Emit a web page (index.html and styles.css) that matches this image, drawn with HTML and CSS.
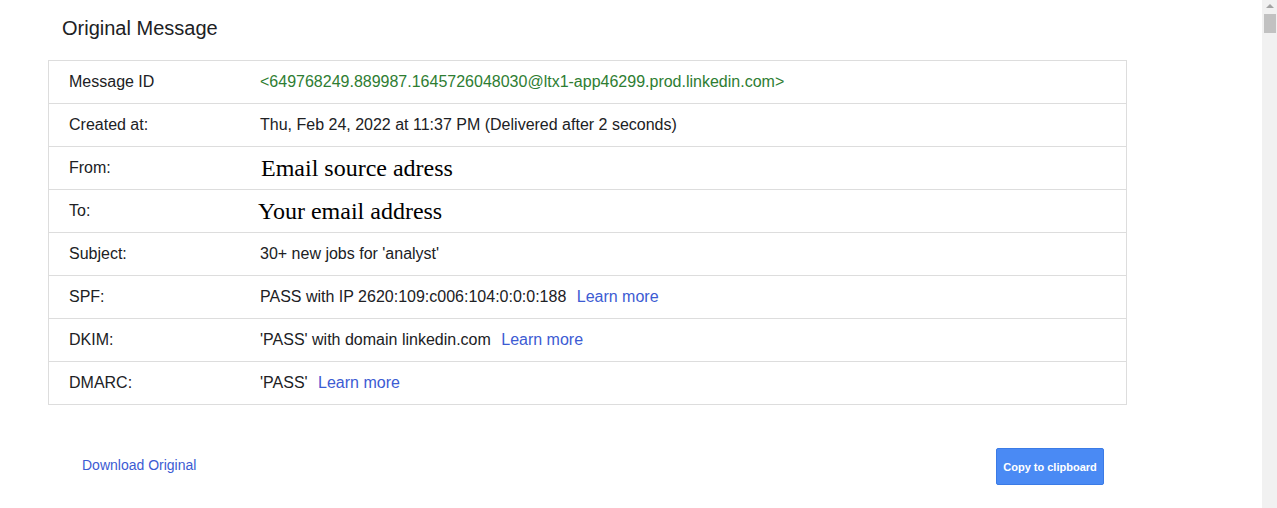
FILE: index.html
```html
<!DOCTYPE html>
<html>
<head>
<meta charset="utf-8">
<link rel="stylesheet" href="styles.css">
</head>
<body>
<div class="page">
  <main class="main">
    <h1 class="title">Original Message</h1>
    <div class="table">
      <div class="row"><div class="label">Message ID</div><div class="value green">&lt;649768249.889987.1645726048030@ltx1-app46299.prod.linkedin.com&gt;</div></div>
      <div class="row"><div class="label">Created at:</div><div class="value">Thu, Feb 24, 2022 at 11:37 PM (Delivered after 2 seconds)</div></div>
      <div class="row"><div class="label">From:</div><div class="value serif from">Email source adress</div></div>
      <div class="row"><div class="label">To:</div><div class="value serif to">Your email address</div></div>
      <div class="row"><div class="label">Subject:</div><div class="value">30+ new jobs for 'analyst'</div></div>
      <div class="row"><div class="label">SPF:</div><div class="value">PASS with IP 2620:109:c006:104:0:0:0:188 <a class="link">Learn more</a></div></div>
      <div class="row"><div class="label">DKIM:</div><div class="value">'PASS' with domain linkedin.com <a class="link">Learn more</a></div></div>
      <div class="row"><div class="label">DMARC:</div><div class="value">'PASS' <a class="link">Learn more</a></div></div>
    </div>
    <div class="actions">
      <a class="download">Download Original</a>
      <button class="copy">Copy to clipboard</button>
    </div>
  </main>
  <div class="scrollbar">
    <div class="arrow"></div>
    <div class="thumb"></div>
  </div>
</div>
</body>
</html>
```
FILE: styles.css
```css
html, body {
  margin: 0;
  padding: 0;
  background: #fff;
  height: 100%;
  overflow: hidden;
}
.page {
  display: flex;
  height: 508px;
  font-family: "Liberation Sans", Arial, sans-serif;
  color: #202124;
}
.main {
  flex: 1;
  padding: 0 0 0 48px;
}
.title {
  margin: 0;
  padding: 16px 0 0 14px;
  height: 60px;
  box-sizing: border-box;
  font-size: 20px;
  font-weight: normal;
  line-height: 24px;
  color: #202124;
}
.table {
  width: 1079px;
  box-sizing: border-box;
  border: 1px solid #dddddd;
  border-bottom: none;
}
.row {
  display: flex;
  align-items: center;
  height: 43px;
  box-sizing: border-box;
  border-bottom: 1px solid #dddddd;
  font-size: 16px;
}
.label {
  width: 211px;
  padding-left: 20px;
  box-sizing: border-box;
  flex: none;
}
.value {
  flex: 1;
  white-space: nowrap;
}
.green {
  color: #2e7d32;
}
.serif {
  font-family: "Liberation Serif", "Times New Roman", serif;
  font-size: 24px;
  color: #000;
}
.from {
  padding-left: 1px;
}
.to {
  margin-left: -2px;
  padding-top: 1px;
}
.link {
  color: #3c5bd3;
  margin-left: 6px;
}
.actions {
  display: flex;
  align-items: center;
  justify-content: space-between;
  width: 1056px;
  padding: 43px 0 0 34px;
  box-sizing: border-box;
}
.download {
  color: #3c5bd3;
  font-size: 14px;
  margin-top: -3px;
}
.copy {
  width: 108px;
  height: 37px;
  background: #4a8af4;
  border: 1px solid #3b7be6;
  border-radius: 2px;
  color: #fff;
  font-family: "Liberation Sans", Arial, sans-serif;
  font-weight: bold;
  font-size: 11px;
  padding: 0;
}
.scrollbar {
  width: 15px;
  flex: none;
  background: #f1f1f1;
  display: flex;
  flex-direction: column;
  align-items: center;
}
.arrow {
  margin-top: 4px;
  width: 0;
  height: 0;
  border-left: 4px solid transparent;
  border-right: 4px solid transparent;
  border-bottom: 4px solid #a3a3a3;
}
.thumb {
  margin-top: 6px;
  width: 12px;
  height: 19px;
  background: #c1c1c1;
}
```
